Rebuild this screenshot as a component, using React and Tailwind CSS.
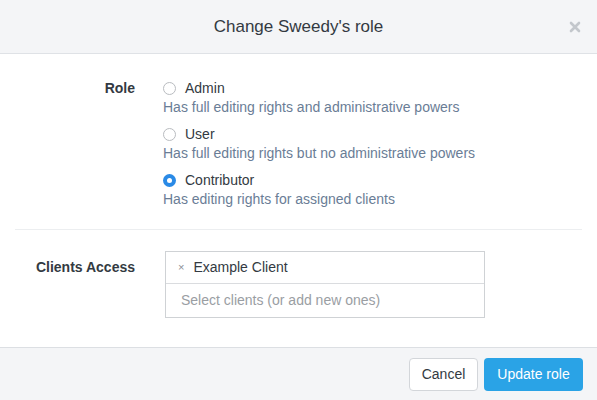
import React, { useState } from 'react';

const roles = [
  { id: 'admin', label: 'Admin', desc: 'Has full editing rights and administrative powers' },
  { id: 'user', label: 'User', desc: 'Has full editing rights but no administrative powers' },
  { id: 'contributor', label: 'Contributor', desc: 'Has editing rights for assigned clients' },
];

function Radio({ checked }) {
  if (checked) {
    return (
      <span className="w-[13px] h-[13px] rounded-full bg-[#2a8ae6] flex items-center justify-center shrink-0">
        <span className="w-[5px] h-[5px] rounded-full bg-white" />
      </span>
    );
  }
  return <span className="w-[13px] h-[13px] rounded-full border border-[#b9bcc0] bg-white shrink-0" />;
}

export default function App() {
  const [role, setRole] = useState('contributor');

  return (
    <div className="w-[597px] h-[400px] bg-white flex flex-col text-[#333a42]" style={{ fontFamily: '"Liberation Sans", Arial, sans-serif' }}>
      <div className="h-[54px] bg-[#f4f5f7] border-b border-[#dfe2e6] flex items-center justify-center relative shrink-0">
        <h2 className="text-[17px] text-[#333a42]">Change Sweedy's role</h2>
        <button className="absolute right-[16px] top-[21px] text-[#c3c7cc]">
          <svg width="12" height="12" viewBox="0 0 12 12">
            <path d="M2 2 L10 10 M10 2 L2 10" stroke="currentColor" strokeWidth="2.6" strokeLinecap="round" />
          </svg>
        </button>
      </div>

      <div className="flex-1 px-[15px]">
        <div className="flex pt-[25px] pb-[20px] border-b border-[#eceef0]">
          <div className="w-[120px] text-right font-bold text-[14px] leading-[19px]">Role</div>
          <div className="ml-[28px] flex flex-col gap-[8px]">
            {roles.map(r => (
              <div key={r.id} className="cursor-pointer" onClick={() => setRole(r.id)}>
                <div className="flex items-center gap-[9px] text-[14px] leading-[19px]">
                  <Radio checked={role === r.id} />
                  <span>{r.label}</span>
                </div>
                <div className="text-[14px] leading-[19px] text-[#6a7d96]">{r.desc}</div>
              </div>
            ))}
          </div>
        </div>

        <div className="flex pt-[21px]">
          <div className="w-[120px] text-right font-bold text-[14px] leading-[33px]">Clients Access</div>
          <div className="ml-[30px] w-[320px] border border-[#cfd2d5]">
            <div className="h-[32px] flex items-center px-[12px] border-b border-[#dadcdf] text-[14px]">
              <span className="text-[#8a8f95] text-[11px] mr-[9px]">×</span>
              <span>Example Client</span>
            </div>
            <div className="h-[33px] flex items-center px-[15px] text-[14px] text-[#9a9ea3]">
              Select clients (or add new ones)
            </div>
          </div>
        </div>
      </div>

      <div className="h-[53px] bg-[#f4f5f7] border-t border-[#dcdfe3] flex items-center justify-end gap-[6px] pr-[14px] shrink-0">
        <button className="h-[33px] w-[69px] bg-white border border-[#d3d6da] rounded-[4px] text-[14px] text-[#333a42]">Cancel</button>
        <button className="h-[33px] w-[99px] bg-[#2aa3e6] rounded-[4px] text-[14px] text-white">Update role</button>
      </div>
    </div>
  );
}
